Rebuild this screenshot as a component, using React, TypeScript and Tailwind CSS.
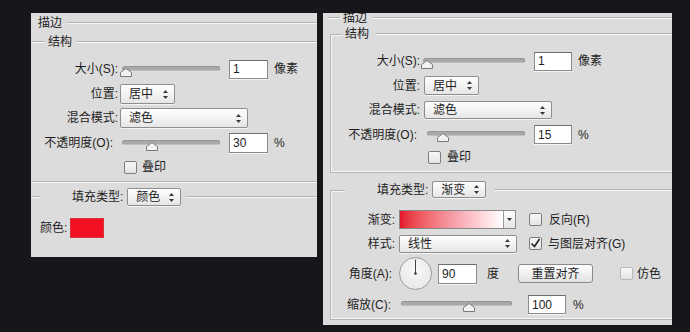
import React from "react";

const font = "font-['Liberation_Sans','Noto_Sans_CJK_SC',sans-serif]";

const Etched: React.FC<{ className?: string }> = ({ className = "" }) => (
  <div className={`h-[2px] border-t border-t-[#b4b4b4] border-b border-b-[#f6f6f6] ${className}`} />
);

const UpDown = () => (
  <svg width="5" height="9" viewBox="0 0 5 9" className="shrink-0">
    <path d="M2.5 0 L5 3 L0 3 Z" fill="#3a3a3a" />
    <path d="M0 6 L5 6 L2.5 9 Z" fill="#3a3a3a" />
  </svg>
);

const Dropdown: React.FC<{ text: string; className: string }> = ({ text, className }) => (
  <div
    className={`flex items-center justify-between pl-[8px] pr-[6px] border border-[#8e8e8e] rounded-[2px] bg-gradient-to-b from-white to-[#e6e6e6] shadow-[0_1px_0_#f4f4f4] ${className}`}
  >
    <span className="leading-none">{text}</span>
    <UpDown />
  </div>
);

const Field: React.FC<{ value: string; className: string }> = ({ value, className }) => (
  <div
    className={`flex items-center pl-[3px] bg-white border border-[#8a8a8a] border-t-[#6e6e6e] shadow-[0_1px_0_#f4f4f4] ${className}`}
  >
    <span className="leading-none text-[12px]">{value}</span>
  </div>
);

const Slider: React.FC<{ className: string; thumb: number }> = ({ className, thumb }) => (
  <div className={`relative h-[12px] ${className}`}>
    <div className="absolute left-0 right-0 top-[1px] h-[5px] rounded-[3px] bg-[#a9a9a9] border border-[#959595] border-b-[#c0c0c0]" />
    <svg
      width="12"
      height="9"
      viewBox="0 0 12 9"
      className="absolute top-[3px]"
      style={{ left: thumb - 6 }}
    >
      <path d="M0.5 8.5 L0.5 4.5 L6 0.5 L11.5 4.5 L11.5 8.5 Z" fill="#f2f2f2" stroke="#7a7a7a" />
    </svg>
  </div>
);

const Check: React.FC<{ checked?: boolean; faint?: boolean; className?: string }> = ({
  checked,
  faint,
  className = "",
}) => (
  <div
    className={`w-[13px] h-[13px] shrink-0 rounded-[2px] flex items-center justify-center bg-gradient-to-b from-[#f8f8f8] to-[#e4e4e4] border ${
      faint ? "border-[#b8b8b8]" : "border-[#7e7e7e]"
    } ${className}`}
  >
    {checked && (
      <svg width="11" height="11" viewBox="0 0 11 11">
        <path d="M1.5 5.5 L4.5 8.5 L9.5 1" fill="none" stroke="#222" strokeWidth="1.6" />
      </svg>
    )}
  </div>
);

const Label: React.FC<{ text: string; className: string }> = ({ text, className }) => (
  <div className={`text-right shrink-0 leading-none ${className}`}>{text}</div>
);

function LeftPanel() {
  return (
    <div className="w-[286px] h-[244px] ml-[31px] bg-[#dcdcdc] flex flex-col overflow-hidden">
      <div className="h-[20px] flex items-center">
        <span className="pl-[7px] pr-[5px] leading-none">描边</span>
        <Etched className="flex-1" />
      </div>
      <div className="h-[18px] flex items-center">
        <Etched className="w-[13px] ml-[1px]" />
        <span className="ml-[3px] leading-none">结构</span>
        <Etched className="flex-1 ml-[5px]" />
      </div>
      <div className="mt-[6px] h-[24px] flex items-center">
        <Label text="大小(S):" className="w-[87px]" />
        <Slider className="ml-[4px] w-[98px] mt-[3px]" thumb={4} />
        <Field value="1" className="ml-[9px] w-[39px] h-[19px]" />
        <span className="ml-[6px] leading-none">像素</span>
      </div>
      <div className="h-[26px] flex items-center">
        <Label text="位置:" className="w-[87px]" />
        <Dropdown text="居中" className="ml-[2px] w-[55px] h-[20px]" />
      </div>
      <div className="h-[22px] flex items-center">
        <Label text="混合模式:" className="w-[87px]" />
        <Dropdown text="滤色" className="ml-[2px] w-[128px] h-[20px]" />
      </div>
      <div className="h-[28px] flex items-center">
        <Label text="不透明度(O):" className="w-[82px]" />
        <Slider className="ml-[9px] w-[98px] mt-[3px]" thumb={30} />
        <Field value="30" className="ml-[9px] w-[39px] h-[20px]" />
        <span className="ml-[6px] leading-none">%</span>
      </div>
      <div className="h-[20px] flex items-center pl-[93px]">
        <Check />
        <span className="ml-[5px] leading-none">叠印</span>
      </div>
      <div className="h-[10px] flex items-center">
        <Etched className="flex-1" />
      </div>
      <div className="h-[20px] flex items-center">
        <Etched className="w-[8px] ml-[1px]" />
        <span className="ml-[32px] leading-none">填充类型:</span>
        <Dropdown text="颜色" className="ml-[4px] w-[54px] h-[18px]" />
        <Etched className="flex-1 ml-[4px]" />
      </div>
      <div className="mt-[10px] h-[22px] flex items-center">
        <span className="pl-[9px] leading-none">颜色:</span>
        <div className="ml-[3px] w-[34px] h-[20px] bg-[#f50f22] border border-[#d9303c]" />
      </div>
    </div>
  );
}

function RightPanel() {
  return (
    <div className="w-[349px] h-[312px] ml-[6px] bg-[#dcdcdc] flex flex-col overflow-hidden">
      <div className="h-[16px] -mt-[3px] flex items-center">
        <Etched className="w-[12px] ml-[5px]" />
        <span className="ml-[3px] leading-none">描边</span>
        <Etched className="flex-1 ml-[5px]" />
      </div>
      {/* 结构 group */}
      <div className="h-[17px] flex items-start">
        <div className="ml-[7px] mt-[8px] w-[12px] h-[9px] border-l border-t border-[#b4b4b4] shadow-[inset_1px_1px_0_#f6f6f6]" />
        <span className="ml-[3px] mt-[2px] leading-none">结构</span>
        <Etched className="flex-1 ml-[7px] mt-[7px]" />
      </div>
      <div className="ml-[7px] border-l border-b border-[#b4b4b4] shadow-[inset_1px_-1px_0_#f6f6f6] pb-[5px] flex flex-col">
        <div className="mt-[6px] h-[24px] flex items-center">
          <Label text="大小(S):" className="w-[89px]" />
          <Slider className="ml-[3px] w-[102px] mt-[3px]" thumb={4} />
          <Field value="1" className="ml-[9px] w-[38px] h-[19px]" />
          <span className="ml-[6px] leading-none">像素</span>
        </div>
        <div className="h-[25px] flex items-center">
          <Label text="位置:" className="w-[89px]" />
          <Dropdown text="居中" className="ml-[4px] w-[55px] h-[19px]" />
        </div>
        <div className="h-[24px] flex items-center">
          <Label text="混合模式:" className="w-[89px]" />
          <Dropdown text="滤色" className="ml-[4px] w-[128px] h-[18px]" />
        </div>
        <div className="h-[25px] flex items-center">
          <Label text="不透明度(O):" className="w-[86px]" />
          <Slider className="ml-[10px] w-[98px] mt-[3px]" thumb={16} />
          <Field value="15" className="ml-[9px] w-[38px] h-[19px]" />
          <span className="ml-[6px] leading-none">%</span>
        </div>
        <div className="h-[20px] flex items-center pl-[97px]">
          <Check />
          <span className="ml-[6px] leading-none">叠印</span>
        </div>
      </div>
      {/* 填充类型 group */}
      <div className="mt-[7px] h-[20px] flex items-start">
        <div className="ml-[7px] mt-[10px] w-[15px] h-[10px] border-l border-t border-[#b4b4b4] shadow-[inset_1px_1px_0_#f6f6f6]" />
        <span className="ml-[32px] mt-[4px] leading-none">填充类型:</span>
        <Dropdown text="渐变" className="ml-[4px] mt-[1px] w-[54px] h-[17px]" />
        <Etched className="flex-1 ml-[8px] mt-[9px]" />
      </div>
      <div className="ml-[7px] border-l border-b border-[#b4b4b4] shadow-[inset_1px_-1px_0_#f6f6f6] flex flex-col">
        <div className="mt-[9px] h-[21px] flex items-center">
          <Label text="渐变:" className="w-[64px]" />
          <div className="ml-[4px] w-[117px] h-[19px] flex border border-[#8a8a8a]">
            <div className="flex-1 bg-gradient-to-r from-[#e5102c] via-[#f59aa6] to-white" />
            <div className="w-[12px] border-l border-[#9a9a9a] bg-gradient-to-b from-white to-[#e4e4e4] flex items-center justify-center">
              <svg width="5" height="3" viewBox="0 0 5 3">
                <path d="M0 0 L5 0 L2.5 3 Z" fill="#333" />
              </svg>
            </div>
          </div>
          <Check className="ml-[13px]" />
          <span className="ml-[7px] leading-none">反向(R)</span>
        </div>
        <div className="h-[27px] flex items-center">
          <Label text="样式:" className="w-[64px]" />
          <Dropdown text="线性" className="ml-[4px] w-[118px] h-[18px]" />
          <Check checked className="ml-[12px]" />
          <span className="ml-[6px] leading-none">与图层对齐(G)</span>
        </div>
        <div className="h-[33px] flex items-center">
          <Label text="角度(A):" className="w-[61px]" />
          <div className="ml-[7px] w-[33px] h-[33px] shrink-0 rounded-full border border-[#9c9c9c] bg-[radial-gradient(circle_at_50%_40%,#fafafa,#e2e2e2)]">
            <svg width="31" height="31" viewBox="0 0 31 31">
              <line x1="15.5" y1="1.5" x2="15.5" y2="15" stroke="#444" strokeWidth="1" />
              <circle cx="15.5" cy="15.5" r="1.3" fill="#333" />
            </svg>
          </div>
          <Field value="90" className="ml-[6px] w-[39px] h-[20px]" />
          <span className="ml-[10px] leading-none">度</span>
          <div className="ml-[19px] w-[75px] h-[19px] rounded-[3px] border border-[#8a8a8a] bg-gradient-to-b from-white to-[#e2e2e2] flex items-center justify-center leading-none">
            重置对齐
          </div>
          <Check faint className="ml-[27px]" />
          <span className="ml-[4px] leading-none">仿色</span>
        </div>
        <div className="h-[29px] flex items-center">
          <Label text="缩放(C):" className="w-[60px]" />
          <Slider className="ml-[10px] w-[111px] mt-[3px]" thumb={68} />
          <Field value="100" className="ml-[16px] w-[38px] h-[19px]" />
          <span className="ml-[7px] leading-none">%</span>
        </div>
      </div>
    </div>
  );
}

export default function App() {
  return (
    <div className={`w-[690px] h-[332px] bg-[#16161b] pt-[13px] flex items-start text-[12px] text-[#1e1e1e] ${font}`}>
      <LeftPanel />
      <RightPanel />
    </div>
  );
}
